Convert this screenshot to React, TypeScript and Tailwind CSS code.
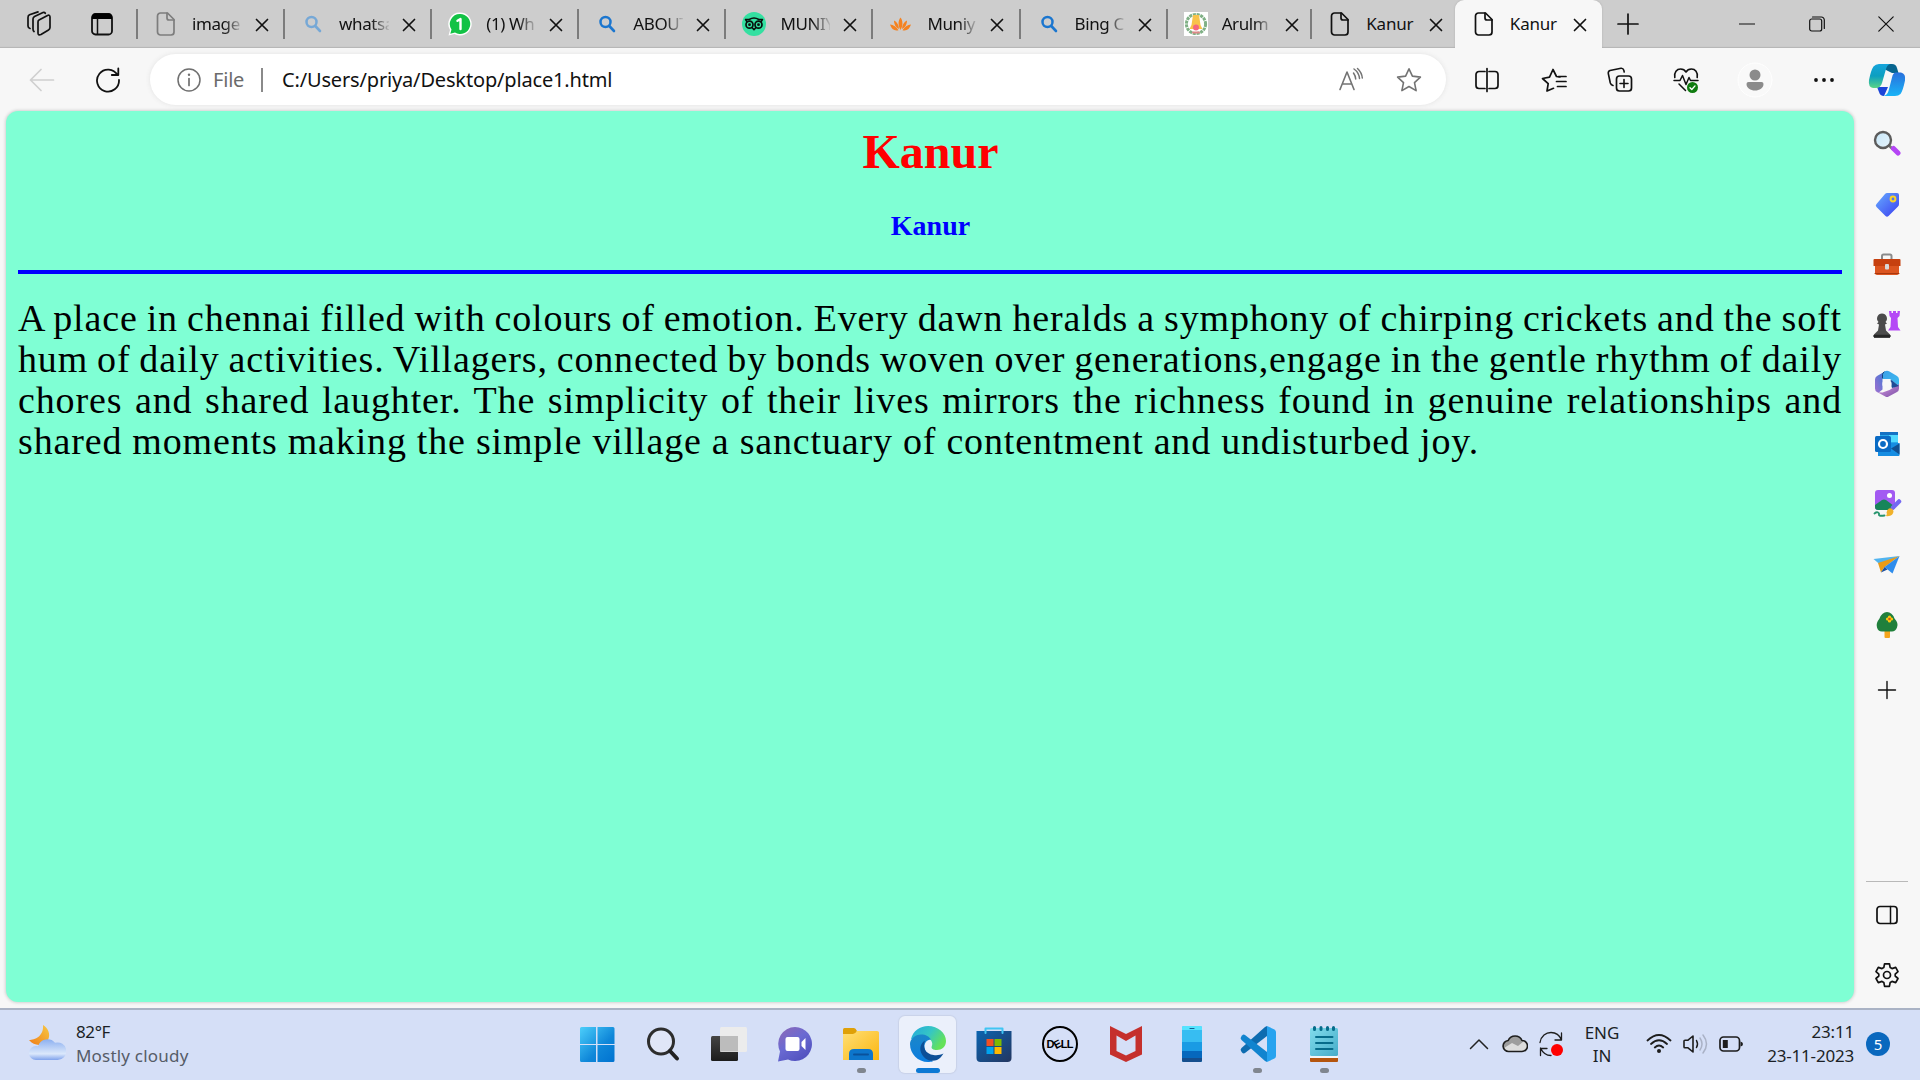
import React from "react";

type SvgProps = { w?: number; h?: number; className?: string; children: React.ReactNode };

/* Drawing area whose user units equal CSS pixels. */
function Svg({ w = 24, h, className = "", children }: SvgProps) {
  const hh = h ?? w;
  return (
    <svg width={w} height={hh} viewBox={`0 0 ${w} ${hh}`} fill="none" strokeLinecap="round" strokeLinejoin="round" className={`shrink-0 ${className}`}>
      {children}
    </svg>
  );
}

/* ---------- tab icons ---------- */
const PageIcon = ({ color }: { color: string }) => (
  <Svg>
    <path d="M6.500 1h7L20 7.500V20a3 3 0 0 1-3 3H6.500a3 3 0 0 1-3-3V4a3 3 0 0 1 3-3z" stroke={color} strokeWidth="1.700" />
    <path d="M13 1v5a2 2 0 0 0 2 2h5" stroke={color} strokeWidth="1.700" />
  </Svg>
);
const BingSearch = ({ color }: { color: string }) => (
  <Svg>
    <circle cx="10.500" cy="10" r="5" stroke={color} strokeWidth="2.500" />
    <path d="M14.300 14 19 19" stroke={color} strokeWidth="2.600" />
  </Svg>
);
const WhatsApp = () => (
  <Svg>
    <path d="M12 .5A11.500 11.500 0 0 0 2 18L.5 23.500 6.500 22A11.500 11.500 0 1 0 12 .5z" fill="#fff" />
    <path d="M12 2A10 10 0 0 0 3.500 17.500L2.300 21.700 7 20.500A10 10 0 1 0 12 2z" fill="#12c245" />
    <path d="M9.500 8.800 12.500 7v10" stroke="#fff" strokeWidth="2.400" />
  </Svg>
);
const Tripadvisor = () => (
  <Svg>
    <circle cx="12" cy="12" r="12" fill="#34e0a1" />
    <path d="M3.500 7.500h3.700a9 9 0 0 1 9.600 0h3.700l-1.300 2M3.500 7.500l1.300 2M10 15.500l2 2.300 2-2.300" stroke="#08110d" strokeWidth="1.500" />
    <circle cx="7.500" cy="12.700" r="3.500" stroke="#08110d" strokeWidth="1.700" />
    <circle cx="16.500" cy="12.700" r="3.500" stroke="#08110d" strokeWidth="1.700" />
    <circle cx="7.500" cy="12.700" r="1.400" fill="#08110d" />
    <circle cx="16.500" cy="12.700" r="1.400" fill="#08110d" />
  </Svg>
);
const Lotus = () => (
  <Svg>
    <path d="M11.500 5.500c2.600 3.500 2.600 8 0 12.500-2.600-4.500-2.600-9 0-12.500z" fill="#f58220" />
    <path d="M5 8.500c3 1.500 4.800 4 5 8.500C6.500 15.500 5 12 5 8.500zM18 8.500c-3 1.500-4.800 4-5 8.500 3.500-1.500 5-5 5-8.500z" fill="#f58220" />
    <path d="M1 12.500c3.500.5 6.500 2.200 8.500 5.700C5.500 19.500 2.500 17 1 12.500zM22 12.500c-3.500.5-6.500 2.200-8.500 5.700C17.500 19.500 20.500 17 22 12.500z" fill="#f58220" />
  </Svg>
);
const Emblem = () => (
  <Svg>
    <path d="M0 0h24v24H0z" fill="#fff" />
    <circle cx="12" cy="12" r="9.600" stroke="#7fb085" strokeWidth="3" strokeDasharray="3 .8" strokeLinecap="butt" />
    <path d="M9 3h6l1.500 10 2 4h-13l2-4z" fill="#f8c34a" />
    <circle cx="12" cy="15.500" r="3" fill="#f5687d" />
    <path d="M9 20.500h6" stroke="#d88" strokeWidth="2" />
  </Svg>
);

const tabs = [
  { title: "image", icon: <PageIcon color="#7d7d7d" /> },
  { title: "whatsa", icon: <BingSearch color="#76a8d6" /> },
  { title: "(1) Wh", icon: <WhatsApp /> },
  { title: "ABOUT", icon: <BingSearch color="#1b76cf" /> },
  { title: "MUNIY", icon: <Tripadvisor /> },
  { title: "Muniy", icon: <Lotus /> },
  { title: "Bing C", icon: <BingSearch color="#1b76cf" /> },
  { title: "Arulm", icon: <Emblem /> },
  { title: "Kanur", icon: <PageIcon color="#111" /> },
];

function TabBody({ title, icon }: { title: string; icon: React.ReactNode }) {
  const faded = title !== "Kanur";
  return (
    <>
      <div className="ml-[16px] flex w-6">{icon}</div>
      <div
        className={
          faded
            ? "ml-[14px] w-[50px] overflow-hidden whitespace-nowrap text-[17px] tracking-[-0.400px] text-[#111] [mask-image:linear-gradient(to_right,#000_64%,transparent_104%)]"
            : "ml-[14px] w-[50px] whitespace-nowrap text-[17px] tracking-[-0.200px] text-[#111]"
        }
      >
        {title}
      </div>
      <Svg w={14} className="ml-[13px] mt-[2px]">
        <path d="M1.500 1.500l11 11M12.500 1.500l-11 11" stroke="#111" strokeWidth="1.700" />
      </Svg>
    </>
  );
}

function TabStrip() {
  return (
    <div className="flex h-12 bg-[#cdcdcd] shadow-[inset_0_-2px_1px_-1px_#b5b5b5]">
      <div className="flex w-[136px] items-center">
        <Svg w={26} className="ml-[26px]">
          <path d="M13 9l8.500-4.500q2.500-1 2.500 1.500v10.500q0 1.500-1.500 2.500L15 23.500q-3 1.300-3-1.500V11q0-1.500 1-2z" stroke="#111" strokeWidth="1.700" />
          <path d="M8 20.500q-1-.7-1-2.500V8q0-1.500 1.500-2.500L17 1.500q1.500-.5 2.300.8M4 17.500Q2 17 2 15V6.500Q2 4.500 3.500 3.800L12 .9" stroke="#111" strokeWidth="1.700" />
        </Svg>
        <Svg w={24} className="ml-[38px]">
          <rect x="2" y="2" width="20" height="20.500" rx="3.500" stroke="#111" strokeWidth="1.800" />
          <path d="M2 7V5a3.500 3.500 0 0 1 3.500-3.500h13A3.500 3.500 0 0 1 22 5v2z" fill="#000" />
          <path d="M7.500 7v15" stroke="#111" strokeWidth="1.500" />
        </Svg>
      </div>
      {tabs.map((t, i) => (
        <div key={i} className={i < 7 ? "flex w-[147.100px] items-center" : "flex w-[144.600px] items-center"}>
          <div className="h-[30px] w-[2px] bg-[#7c7c7c]" />
          <TabBody {...t} />
        </div>
      ))}
      <div className="flex w-[147px] items-center rounded-t-[9px] bg-[#f7f7f7] pl-px shadow-[0_0_2px_#aaa]">
        <TabBody title="Kanur" icon={<PageIcon color="#111" />} />
      </div>
      <div className="flex flex-1 items-center">
        <Svg w={22} className="ml-[15px]">
          <path d="M11 1v20M1 11h20" stroke="#111" strokeWidth="1.700" />
        </Svg>
        <Svg w={16} className="ml-auto mr-[54px]">
          <path d="M.5 8h15" stroke="#111" strokeWidth="1.200" />
        </Svg>
        <Svg w={16} className="mr-[53px]">
          <rect x=".7" y="3" width="12" height="12" rx="2" stroke="#111" strokeWidth="1.200" />
          <path d="M3.500 1h8.800a3 3 0 0 1 3 3v8.500" stroke="#111" strokeWidth="1.200" />
        </Svg>
        <Svg w={16} className="mr-[26px]">
          <path d="M.8.8l14.400 14.400M15.200.8L.8 15.200" stroke="#111" strokeWidth="1.200" />
        </Svg>
      </div>
    </div>
  );
}

function Toolbar() {
  return (
    <div className="flex h-[63px] items-center bg-[#f7f7f7]">
      <Svg w={26} className="ml-[29px]">
        <path d="M24.500 13H1.500M12 2.500L1.500 13 12 23.500" stroke="#cfcfcf" strokeWidth="1.700" />
      </Svg>
      <Svg w={26} className="ml-[40px]">
        <path d="M22.500 8A11 11 0 1 0 24 13M23.300 1.500V8h-6.500" stroke="#111" strokeWidth="1.800" />
      </Svg>
      <div className="ml-[29px] flex h-[51px] w-[1296px] items-center rounded-full bg-white shadow-[0_0_5px_#e2e2e2]">
        <Svg w={24} className="ml-[27px]">
          <circle cx="12" cy="12" r="11" stroke="#707070" strokeWidth="1.500" />
          <path d="M12 10.500v7" stroke="#707070" strokeWidth="1.700" />
          <circle cx="12" cy="6.800" r="1.200" fill="#707070" />
        </Svg>
        <div className="ml-[12px] w-[48px] text-[20px] tracking-[-0.200px] text-[#6b6b6b]">File</div>
        <div className="h-6 w-[2px] bg-[#8a8a8a]" />
        <div className="ml-[19px] whitespace-nowrap text-[20px] tracking-[-0.160px] text-[#111]">C:/Users/priya/Desktop/place1.html</div>
        <Svg w={26} className="ml-auto mr-[32px]">
          <path d="M2 22.500L9 5l7 17.500M4.500 17h9" stroke="#737373" strokeWidth="1.600" />
          <path d="M15.500 6q2 2.800 2.200 6M16 2q5 3.500 5.500 9.500M19.500 1.500q4.300 4 4.800 9.500" stroke="#737373" strokeWidth="1.500" />
        </Svg>
        <Svg w={26} className="mr-[24px]">
          <path d="M13 1.800l3.400 7.300 8 1-5.900 5.500 1.600 8L13 19.500l-7.100 4.100 1.600-8L1.600 10.100l8-1z" stroke="#737373" strokeWidth="1.600" />
        </Svg>
      </div>
      <Svg w={26} className="ml-[28px]">
        <path d="M11 4.500H5a3 3 0 0 0-3 3v11a3 3 0 0 0 3 3h6M15 4.500h6a3 3 0 0 1 3 3v11a3 3 0 0 1-3 3h-6M13 1.500v23" stroke="#111" strokeWidth="1.700" />
      </Svg>
      <Svg w={26} className="ml-[41px]">
        <path d="M12.500 21.300L6 24l1.200-7.300L1.500 11.500l7-1.300L12 2.500l3.500 7 3.500.5" stroke="#111" strokeWidth="1.700" />
        <path d="M17.500 9.500H25M15.500 14.500H25M16.500 19.500H25" stroke="#111" strokeWidth="1.700" />
      </Svg>
      <Svg w={26} className="ml-[40px]">
        <path d="M6 18.500Q4 18 3.300 16L1.300 6.500Q1 4.200 3 3.500L14 1.200q2.200-.2 2.800 2L17.200 5" stroke="#111" strokeWidth="1.600" />
        <rect x="9.500" y="9" width="15" height="15" rx="3" stroke="#111" strokeWidth="1.700" />
        <path d="M17 12.500v8M13 16.500h8" stroke="#111" strokeWidth="1.600" />
      </Svg>
      <Svg w={26} className="ml-[40px]">
        <path d="M1.800 10.500C.8 5 4 2 7.500 2c2.500 0 4.500 1.200 5.500 3 1-1.800 3-3 5.500-3 3.500 0 6.700 3 5.700 8.500" stroke="#111" strokeWidth="1.600" />
        <path d="M1 13.500h6l2.500-5 3.500 9 3-7 1.500 3H25M6 17l6.500 6.500" stroke="#111" strokeWidth="1.500" />
        <circle cx="19.500" cy="20.500" r="5.500" fill="#107c10" />
        <path d="M17 20.700l1.800 1.800 3.200-3.600" stroke="#fff" strokeWidth="1.400" />
      </Svg>
      <Svg w={36} className="ml-[38px]">
        <circle cx="18" cy="18" r="17" fill="#f9f9f9" stroke="#fff" />
        <circle cx="18" cy="13" r="5.500" fill="#8b8b8b" />
        <path d="M11.500 20h13a2 2 0 0 1 2 2c0 4-4 6.500-8.500 6.500S9.500 26 9.500 22a2 2 0 0 1 2-2z" fill="#8b8b8b" />
      </Svg>
      <Svg w={22} className="ml-[40px]">
        <circle cx="3" cy="11" r="1.900" fill="#111" />
        <circle cx="11" cy="11" r="1.900" fill="#111" />
        <circle cx="19" cy="11" r="1.900" fill="#111" />
      </Svg>
      <Svg w={38} h={34} className="ml-[33px]">
        <defs>
          <linearGradient id="cpA" x1="0" y1="0" x2="0" y2="1"><stop offset="0" stopColor="#16a5dc" /><stop offset=".5" stopColor="#0c9fc0" /><stop offset="1" stopColor="#5bd486" /></linearGradient>
          <linearGradient id="cpB" x1="0" y1="0" x2="0" y2="1"><stop offset="0" stopColor="#2a70dc" /><stop offset="1" stopColor="#19b4f7" /></linearGradient>
        </defs>
        <path d="M12 1h12q4 0 5 4l1.500 5H24l-6-3-6-4z" fill="#08658f" />
        <path d="M11 24h9l-4 9q-4 0-5-4l-2-5z" fill="#1c45d8" />
        <path d="M11 1h11q-3 1-4 5l-4 14q-1.500 5-6 5H5q-5-1-4-8Q3 7 5.500 3.500 7.500 1 11 1z" fill="url(#cpA)" />
        <path d="M28 9.500h5q5 1 4 8-2 10-4.500 13.500Q30.500 33 27 33H15.500q4-1 5-5L24 14.500q1-5 4-5z" fill="url(#cpB)" />
      </Svg>
    </div>
  );
}

/* ---------- sidebar ---------- */
const sideIcons: React.ReactNode[] = [
  <Svg w={28} className="-ml-px">
    <defs><linearGradient id="lens" x1="0" y1="0" x2="1" y2="1"><stop stopColor="#c7e7f9" /><stop offset="1" stopColor="#e5f3fb" /></linearGradient></defs>
    <path d="M16.500 17l3 3" stroke="#777" strokeWidth="2.500" />
    <path d="M20.500 19.500l4.500 4.500" stroke="#b545f5" strokeWidth="5" />
    <circle cx="10" cy="11" r="8" fill="url(#lens)" stroke="#5c5c5c" strokeWidth="2.400" />
  </Svg>,
  <Svg w={28} className="mt-[3px]">
    <defs><linearGradient id="tag" x1="0" y1="0" x2="1" y2="1"><stop stopColor="#67adff" /><stop offset="1" stopColor="#3a3df0" /></linearGradient></defs>
    <path d="M14 2h10q2 0 2 2v9q0 1.500-1 2.500l-9.500 9.500q-1.500 1.500-3 0l-9-9q-1.500-1.500 0-3l8.500-10q1-1 2-1z" fill="url(#tag)" />
    <circle cx="20" cy="8" r="2.400" stroke="#fbd327" strokeWidth="2" />
  </Svg>,
  <Svg w={28} className="mt-[3px]">
    <path d="M9 8V5q0-1.500 1.500-1.500h6.500q1.500 0 1.500 1.500v3" stroke="#8b8b8b" strokeWidth="2" />
    <rect x="2" y="9" width="24" height="15" rx="2" fill="#dc5520" />
    <path d="M.5 9q0-1 1-1h25q1 0 1 1v6h-27z" fill="#c6400f" />
    <path d="M2 22.500h24" stroke="#a9380d" />
    <rect x="12" y="13" width="4" height="5.500" rx="1" fill="#d8d8d8" />
  </Svg>,
  <Svg w={28}>
    <path d="M16 1h2.500v2H20V1h3v2h1.500V1H27l-.5 5-2 2 .5 9 2.500 3.500H15l2.500-3.500.5-9-1.500-2z" fill="#b548f6" />
    <path d="M9 3.500a5 5 0 0 1 3.500 8.500l1.500 1.500-2 1 1 6 4 4v3.500H1v-3.500l4-4 1-6-2-1L5.500 12A5 5 0 0 1 9 3.500z" fill="#4c4c4c" />
    <path d="M1.500 26h15" stroke="#262626" strokeWidth="2.500" />
  </Svg>,
  <Svg w={28}>
    <defs>
      <linearGradient id="mA" x1="0" y1="1" x2="1" y2="0"><stop stopColor="#a070cf" /><stop offset="1" stopColor="#3979d7" /></linearGradient>
      <linearGradient id="mB" x1="0" y1="0" x2="1" y2="1"><stop stopColor="#3c9fe8" /><stop offset="1" stopColor="#3cbdf0" /></linearGradient>
      <linearGradient id="mC" x1="0" y1="0" x2="1" y2="1"><stop stopColor="#d79be0" /><stop offset="1" stopColor="#7c4fa8" /></linearGradient>
    </defs>
    <path d="M12 1.500L4 6Q2 7.200 2 9.500v9q0 2.300 2 3.500l1.500.8 4-3.300V9z" fill="url(#mA)" />
    <path d="M9.500 9V4q0-1.500 1.500-2.300 3-1.700 5-.4L24 6q2 1.200 2 3.500V16l-9-7z" fill="url(#mB)" />
    <path d="M26 14v4.500q0 2.300-2 3.500l-8.300 4.500q-1.700 1-3.400 0L4.500 22.200l5 .3 7-2.500L26 14z" fill="url(#mC)" />
    <path d="M26 16l-7.500-6-1.500 1 2 7z" fill="#1f4c96" />
    <path d="M9.500 8V4.500q0-1.500 1.500-2.500" stroke="#17457f" strokeWidth="1" />
    <circle cx="14" cy="14" r="4.700" fill="#f7f7f7" />
  </Svg>,
  <Svg w={28}>
    <rect x="7" y="2" width="18" height="16" rx="1" fill="#28a8ea" />
    <path d="M7 2h18v3H7z" fill="#1472c4" />
    <path d="M16 5h9v7h-9z" fill="#50d9ff" />
    <path d="M5 13h21.500v12q0 1-1 1H5z" fill="#168de2" />
    <path d="M18 18.500l8.500-5v11z" fill="#104f91" />
    <rect x="2" y="6" width="16" height="16" rx="1.500" fill="#0a6bc4" />
    <circle cx="10" cy="14" r="4" stroke="#fff" strokeWidth="2.200" />
  </Svg>,
  <Svg w={30}>
    <rect x="3" y="1" width="20" height="20" rx="3" fill="#a35af2" />
    <path d="M3 16l7-5q2-1 4 0l8 6q-1 4-4 4H6q-3 0-3-3z" fill="#17855a" />
    <circle cx="17.500" cy="6.500" r="2.500" fill="#fff" />
    <path d="M27 12.500L21 18.500" stroke="#7468f2" strokeWidth="4.500" />
    <path d="M17 19.500q3.500-1 4.500 2.500 0 6-8 5 2-1 1-3.500.5-3 2.500-4z" fill="#f1b22b" />
    <path d="M2.500 24.500c3-2.500 5-.5 4.500 1s2.500 1.500 5.500 1" stroke="#27946d" strokeWidth="1.900" />
  </Svg>,
  <Svg w={28}>
    <path d="M.5 9L26.500 6 7.500 15z" fill="#51b4ef" />
    <path d="M26.500 6L5 13l3 9.500 3-5z" fill="#e99b18" />
    <path d="M26.500 6L11.500 17l8 6.500z" fill="#2e8cec" />
    <path d="M11.500 17l3 2.500L8 22.500z" fill="#1c4f9f" />
  </Svg>,
  <Svg w={28}>
    <rect x="11.500" y="19" width="5.500" height="8" rx="1" fill="#f5a51c" />
    <path d="M14 1q5 0 7.500 6.500 4.500 5 2.500 9-1.500 4-5 4H9q-4 0-5-4-1.500-4 2.500-9Q9 1 14 1z" fill="#20803c" />
    <path d="M16.500 6v4M14.500 8h4" stroke="#fcc711" strokeWidth="3.200" />
    <circle cx="16.500" cy="8" r="1.300" fill="#cc5a13" />
  </Svg>,
];

function Sidebar() {
  return (
    <div className="flex w-[66px] shrink-0 flex-col items-center pt-[2px]">
      {sideIcons.map((ic, i) => (
        <div key={i} className="flex h-[60.200px] items-center justify-center">{ic}</div>
      ))}
      <Svg w={20} className="mt-[25px]">
        <path d="M10 1.500v17M1.500 10h17" stroke="#111" strokeWidth="1.400" />
      </Svg>
      <div className="mt-auto h-px w-[42px] bg-[#b9b9b9]" />
      <Svg w={24} className="mt-[21px]">
        <rect x="2" y="3.500" width="20" height="17" rx="3" stroke="#111" strokeWidth="1.700" />
        <path d="M15.500 3.500v17" stroke="#111" strokeWidth="1.500" />
      </Svg>
      <Svg w={26} className="mb-[20px] mt-[35px]">
        <path d="M10.600 1.800h4.800l.8 3.800 1.800 1 3.700-1.200L24 9.600l-2.800 2.500v1.900l2.800 2.500-2.300 4.100-3.700-1.200-1.800 1-.8 3.900h-4.800l-.8-3.900-1.800-1-3.700 1.200L2 16.500 4.800 14v-1.900L2 9.600l2.300-4.200L8 6.600l1.800-1z" stroke="#111" strokeWidth="1.700" />
        <circle cx="13" cy="13" r="3.500" stroke="#111" strokeWidth="1.700" />
      </Svg>
    </div>
  );
}

function WebPage() {
  return (
    <div className="ml-[6px] h-[891px] w-[1848px] rounded-[12px] bg-[#7fffd4] px-[12px] font-['Liberation_Serif',serif] shadow-[0_0_3px_1px_#d3d3d3]">
      <h1 className="pl-px pt-[13px] text-center text-[48px] font-bold leading-[56px] text-[#ff0000]">Kanur</h1>
      <h2 className="mt-[30px] pl-px text-center text-[28px] font-bold leading-[32px] text-[#0000ff]">Kanur</h2>
      <div className="mt-[28px] h-[4px] bg-[#0000ff]" />
      <div className="mt-[24px] whitespace-nowrap text-[38px] leading-[41px] tracking-[0.850px] text-black [text-align-last:justify] [word-spacing:-6px]">
        <p>A place in chennai filled with colours of emotion. Every dawn heralds a symphony of chirping crickets and the soft</p>
        <p>hum of daily activities. Villagers, connected by bonds woven over generations,engage in the gentle rhythm of daily</p>
        <p>chores and shared laughter. The simplicity of their lives mirrors the richness found in genuine relationships and</p>
        <p className="w-[1461px]">shared moments making the simple village a sanctuary of contentment and undisturbed joy.</p>
      </div>
    </div>
  );
}

/* ---------- taskbar ---------- */
const apps: { icon: React.ReactNode; state?: "open" | "active" }[] = [
  {
    icon: (
      <Svg w={36}>
        <defs><linearGradient id="win" x1="0" y1="0" x2="36" y2="36" gradientUnits="userSpaceOnUse"><stop stopColor="#4fd2fc" /><stop offset=".6" stopColor="#0f87d9" /><stop offset="1" stopColor="#0072d0" /></linearGradient></defs>
        <path d="M2.500 1H17v17H1V2.500Q1 1 2.500 1zM18.500 1H34q1.500 0 1.500 1.500V18h-17zM1 19h16v17H2.500Q1 36 1 34.500zM18.500 19h17v15.500Q35.500 36 34 36H18.500z" fill="url(#win)" />
      </Svg>
    ),
  },
  {
    icon: (
      <Svg w={36}>
        <circle cx="16" cy="15.500" r="12.500" fill="#e0e6f7" stroke="#2d2d2d" strokeWidth="3" />
        <path d="M25 25l7 7.500" stroke="#222" strokeWidth="4" />
      </Svg>
    ),
  },
  {
    icon: (
      <Svg w={36}>
        <defs><linearGradient id="tv" x1="0" y1="0" x2="0" y2="1"><stop stopColor="#444" /><stop offset="1" stopColor="#1c1c1c" /></linearGradient></defs>
        <rect x="0" y="10" width="27" height="25" rx="1.500" fill="url(#tv)" />
        <rect x="9" y="1" width="27" height="25" rx="1.500" fill="#ececec" />
        <path d="M9 10h18v15.500H9z" fill="#bcbcbc" />
      </Svg>
    ),
  },
  {
    icon: (
      <Svg w={36}>
        <defs><linearGradient id="chat" x1="0" y1="0" x2=".7" y2="1"><stop stopColor="#9068b4" /><stop offset=".5" stopColor="#6a6ad2" /><stop offset="1" stopColor="#5151be" /></linearGradient></defs>
        <path d="M18 1a17 17 0 1 1-7 32.500L1 35.500l2-10A17 17 0 0 1 18 1z" fill="url(#chat)" />
        <rect x="8.500" y="11" width="14" height="14" rx="2" fill="#fff" />
        <path d="M24.500 16l4-4v12l-4-4z" fill="#fff" />
      </Svg>
    ),
  },
  {
    icon: (
      <Svg w={36}>
        <defs><linearGradient id="fold" x1="0" y1="0" x2="1" y2="1"><stop stopColor="#ffdf76" /><stop offset="1" stopColor="#fbb60f" /></linearGradient></defs>
        <path d="M0 3.500Q0 2 1.500 2H11q1.500 0 3 3l-2 4H0z" fill="#dfa008" />
        <path d="M0 8h10q2 0 4-3h20q2 0 2 1.500V34H0z" fill="url(#fold)" />
        <path d="M6 34v-6q0-5 5-5h14q5 0 5 5v6z" fill="#0d76cc" />
        <path d="M11 28.500h14" stroke="#0a529b" strokeWidth="2" />
      </Svg>
    ),
    state: "open",
  },
  {
    icon: (
      <Svg w={36}>
        <defs>
          <linearGradient id="eA" x1="0" y1="0" x2="1" y2=".5"><stop stopColor="#22a9dd" /><stop offset=".55" stopColor="#36c6c4" /><stop offset="1" stopColor="#64e258" /></linearGradient>
          <linearGradient id="eB" x1="0" y1="0" x2="0" y2="1"><stop stopColor="#1b87c8" /><stop offset="1" stopColor="#0b7de0" /></linearGradient>
        </defs>
        <path d="M1 13C3 5 10 0 18 0c10 0 18 7 18 15 0 6-4.500 9-9 9-4 0-6-1.500-5.300-3.500 2-4-1-9-7.700-9-5 0-10 1-13 1.500z" fill="url(#eA)" />
        <path d="M0 18c0-5 5-9.500 11-9.500 5 0 8 2 10 5-4 0-8 4-6 10 2 7 7 11 8 11.700-2 .6-3.500.8-5 .8C8 36 0 28 0 18z" fill="url(#eB)" />
        <path d="M15 14.500c-5 3-6 9-3 14 3.500 6 10 7.500 15 5.500 3-1.500 5-4 6.500-6.500-3 1.500-6.500 2-10 1.500C16 28 12 22 15 14.500z" fill="#0d4f97" />
      </Svg>
    ),
    state: "active",
  },
  {
    icon: (
      <Svg w={36}>
        <defs><linearGradient id="store" x1="0" y1="0" x2="1" y2="1"><stop stopColor="#0b64b0" /><stop offset="1" stopColor="#243660" /></linearGradient></defs>
        <path d="M.5 5h35v27q0 4-4 4h-27q-4 0-4-4z" fill="url(#store)" />
        <path d="M9.500 7V2.500h17V7" stroke="#40c5f3" strokeWidth="2" />
        <path d="M10.500 13h7v7h-7z" fill="#f25022" />
        <path d="M18.500 13h7v7h-7z" fill="#7fba00" />
        <path d="M10.500 21h7v7h-7z" fill="#00a4ef" />
        <path d="M18.500 21h7v7h-7z" fill="#ffb900" />
      </Svg>
    ),
  },
  {
    icon: (
      <div className="grid size-9 place-items-center rounded-full border-2 border-black font-['Liberation_Sans',sans-serif] text-[11px] font-bold leading-none tracking-[-0.600px] text-black">
        <span className="flex items-center">D<span className="-rotate-[28deg]">E</span>LL</span>
      </div>
    ),
  },
  {
    icon: (
      <Svg w={36}>
        <path d="M2 0l16 8 16-8v28.500L18 36 2 28.500z" fill="#c5302d" />
        <path d="M8.500 9.500L18 15l9.500-5.500V25L18 29.500 8.500 25z" fill="#d5dff7" />
      </Svg>
    ),
  },
  {
    icon: (
      <Svg w={36}>
        <rect x="8" y="0" width="20" height="36" rx="1.500" fill="#37bdf2" />
        <path d="M9.500 0h17Q28 0 28 1.500V4H8V1.500Q8 0 9.500 0z" fill="#55e3ff" />
        <path d="M8 16h20v9H8z" fill="#1a9be4" />
        <path d="M8 25h20v7H8z" fill="#0668bd" />
        <path d="M8 32h20v2.500q0 1.500-1.500 1.500h-17Q8 36 8 34.500z" fill="#154e8d" />
        <path d="M16 2.500h4" stroke="#126394" strokeWidth="1.200" />
      </Svg>
    ),
  },
  {
    icon: (
      <Svg w={36}>
        <path d="M27 0v10L5 27q-1.500 1-3-.5l-1-1.500q-1-1.500.500-3L25 1z" fill="#0e6cb0" />
        <path d="M27 36V26L5 9q-1.500-1-3 .5L1 11q-1 1.500.500 3L25 35z" fill="#1184cf" />
        <path d="M27 0l7.500 3.500Q36 4.500 36 6v24q0 1.500-1.500 2.500L27 36z" fill="#27a3ef" />
      </Svg>
    ),
    state: "open",
  },
  {
    icon: (
      <Svg w={36}>
        <defs><linearGradient id="note" x1="0" y1="0" x2="1" y2="1"><stop stopColor="#81dcec" /><stop offset="1" stopColor="#45acc9" /></linearGradient></defs>
        <path d="M4 32h28v3q0 1-1 1H5q-1 0-1-1z" fill="#b4550e" />
        <path d="M4 28h28v4H4z" fill="#f4f6f6" />
        <rect x="4" y="2" width="28" height="28" rx="1.500" fill="url(#note)" />
        <path d="M8.500 1.500v2M15 1.500v2M21.500 1.500v2M27.500 1.500v2" stroke="#066b8a" strokeWidth="3" />
        <path d="M10 11h16.500M10 17h16.500M10 23h16.500" stroke="#066b8a" strokeWidth="2" />
      </Svg>
    ),
    state: "open",
  },
];

function AppButton({ icon, state }: { icon: React.ReactNode; state?: "open" | "active" }) {
  return (
    <div className="flex w-[66.100px] justify-center">
      <div className={state === "active" ? "flex h-[57px] w-[57px] flex-col items-center rounded-[6px] bg-[#ebf0fb] pt-[10px] shadow-[0_0_1px_1px_#c9d2e8]" : "flex h-[57px] w-[57px] flex-col items-center pt-[10px]"}>
        {icon}
        {state === "active" && <div className="mt-[6px] h-[5px] w-6 rounded-full bg-[#0c79d4]" />}
        {state === "open" && <div className="mt-[6px] h-[5px] w-[9px] rounded-full bg-[#80868f]" />}
      </div>
    </div>
  );
}

function Taskbar() {
  return (
    <div className="flex h-[72px] border-t-2 border-[#aab3c5] bg-[#d5dff7] text-[17px] text-[#1b1f26]">
      <div className="flex w-[564px]">
        <Svg w={38} className="ml-[28px] mt-[14px]">
          <defs>
            <linearGradient id="moon" x1="1" y1="0" x2="0" y2="1"><stop stopColor="#f7c945" /><stop offset="1" stopColor="#f07d16" /></linearGradient>
            <linearGradient id="cloud" x1="0" y1="0" x2="0" y2="1"><stop stopColor="#8db0f0" /><stop offset=".7" stopColor="#dbe8fb" /><stop offset="1" stopColor="#7fa2ec" /></linearGradient>
          </defs>
          <path d="M15 1c5 3 8 9 5 15-4 6-13 7-19 0 6 0 15-4 14-15z" fill="url(#moon)" />
          <path d="M8 36a7 7 0 1 1 0-14q1 0 2 .3a10 10 0 0 1 17-3.500A8.800 8.800 0 1 1 29 36z" fill="url(#cloud)" />
        </Svg>
        <div className="ml-[10px] mt-[10px] leading-[24px]">
          <div className="tracking-[-0.400px]">82°F</div>
          <div className="tracking-[0.200px] text-[#565c68]">Mostly cloudy</div>
        </div>
      </div>
      <div className="flex pt-[6px]">
        {apps.map((a, i) => (
          <AppButton key={i} {...a} />
        ))}
      </div>
      <div className="ml-auto flex h-[68px] items-center">
        <Svg w={20} h={12}>
          <path d="M1.500 10.500L10 2l8.500 8.500" stroke="#222" strokeWidth="1.500" />
        </Svg>
        <Svg w={26} className="ml-[13px]">
          <path d="M7 20.500a5.500 5.500 0 0 1-.8-11A7.500 7.500 0 0 1 20 9.500a5.500 5.500 0 0 1 0 11z" fill="#dcdcdc" />
          <path d="M2 17a5 5 0 0 1 4.200-7.500A7.500 7.500 0 0 1 20 9.500l2 .5-6 5-6-3z" fill="#9d9d9d" />
          <path d="M7 20.500a5.500 5.500 0 0 1-.8-11A7.500 7.500 0 0 1 20 9.500a5.500 5.500 0 0 1 0 11z" stroke="#1d1d1d" strokeWidth="1.600" />
        </Svg>
        <Svg w={26} className="ml-[10px]">
          <path d="M2 11.500C3 5 8 1.500 13 1.500c4.500 0 8.500 2.500 10.500 7.500M23.500 2v7H17M13 24.500c-4.500 0-8-2-10.500-7.500M2.500 24.500v-7h6.500" stroke="#1d1d1d" strokeWidth="1.300" />
          <circle cx="19" cy="19" r="6" fill="#f00" />
        </Svg>
        <div className="ml-[18px] w-[40px] text-center leading-[23px] tracking-[-0.100px]">
          <div>ENG</div>
          <div>IN</div>
        </div>
        <Svg w={26} className="ml-[24px]">
          <path d="M1.500 9.500q11.500-11 23 0M5 13q8-7.500 16 0M8.800 16.500q4.200-4 8.400 0" stroke="#1d1d1d" strokeWidth="1.800" />
          <circle cx="13" cy="20" r="2" fill="#1d1d1d" />
        </Svg>
        <Svg w={26} className="ml-[10px]">
          <path d="M2 10v6q0 .8 1 .8h3l5 4.200V5L6 9.200H3q-1 0-1 .8z" stroke="#1d1d1d" strokeWidth="1.600" />
          <path d="M14.500 9.500q2 3.500 0 7" stroke="#1d1d1d" strokeWidth="1.500" />
          <path d="M18 7q4 6 0 12M21 4q7 9 0 18" stroke="#aab2c6" strokeWidth="1.500" />
        </Svg>
        <Svg w={26} className="ml-[10px]">
          <rect x="2" y="6" width="19.500" height="14" rx="3.500" stroke="#1d1d1d" strokeWidth="1.700" />
          <path d="M4.800 9h5v8h-5z" fill="#1d1d1d" />
          <path d="M22.500 10.500q2.500.5 2.500 2.500t-2.500 2.500z" fill="#1d1d1d" />
        </Svg>
        <div className="w-[110px] text-right leading-[24px] tracking-[-0.200px]">
          <div>23:11</div>
          <div>23-11-2023</div>
        </div>
        <div className="ml-[12px] mr-[30px] grid size-6 place-items-center rounded-full bg-[#0a68be] text-[15px] leading-none text-white">5</div>
      </div>
    </div>
  );
}

export default function App() {
  return (
    <div className="flex h-[1080px] w-[1920px] flex-col overflow-hidden bg-[#f7f7f7] font-['Noto_Sans',sans-serif]">
      <TabStrip />
      <Toolbar />
      <div className="flex h-[897px]">
        <WebPage />
        <Sidebar />
      </div>
      <Taskbar />
    </div>
  );
}
